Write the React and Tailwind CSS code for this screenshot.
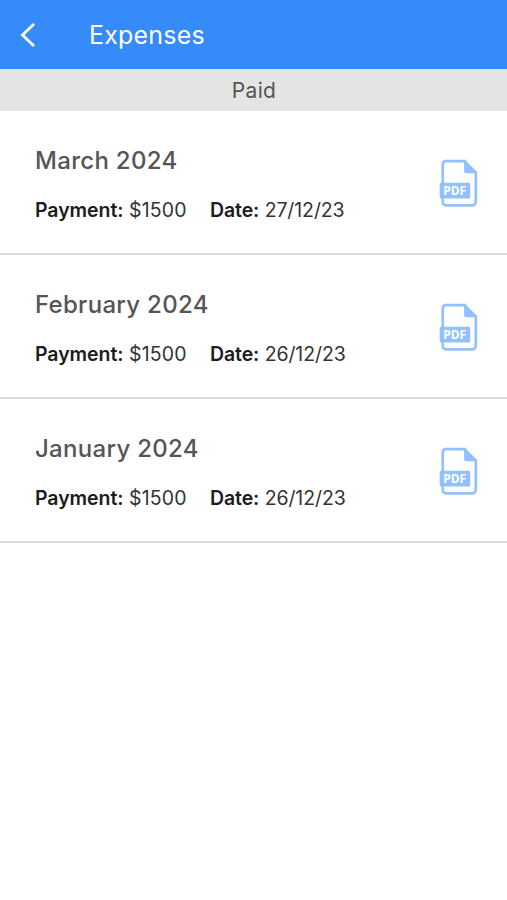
const expenses = [
  { id: 1, month: 'March 2024', payment: '$1500', date: '27/12/23' },
  { id: 2, month: 'February 2024', payment: '$1500', date: '26/12/23' },
  { id: 3, month: 'January 2024', payment: '$1500', date: '26/12/23' },
];

const PdfIcon = () => (
  <svg width="40" height="50" viewBox="0 0 40 50" fill="none">
    <path
      d="M3.7 24V5.2a3 3 0 0 1 3-3H25.5L36.8 13.5V43a3.3 3.3 0 0 1-3.3 3.3H7A3.3 3.3 0 0 1 3.7 43V36"
      stroke="#93c1fd"
      strokeWidth="2.7"
    />
    <path d="M25 1.2L38.1 14.3H28a3 3 0 0 1-3-3Z" fill="#93c1fd" />
    <rect x="0.7" y="23.8" width="30.5" height="15.7" rx="1.5" fill="#93c1fd" />
    <text
      x="4.2"
      y="36"
      fill="#fff"
      fontSize="12"
      fontWeight="700"
      textLength="22.8"
      lengthAdjust="spacingAndGlyphs"
      fontFamily="Open Sans, sans-serif"
    >
      PDF
    </text>
  </svg>
);

const ExpenseRow = ({ expense }) => (
  <div className="h-36 flex items-center justify-between pl-[35px] pr-7 pt-1 border-b-2 border-[#dadada]">
    <div>
      <h2 className="text-2xl leading-8 font-medium text-[#555] tracking-[0.3px]">{expense.month}</h2>
      <div className="flex mt-[19px] text-[19.5px] leading-7 text-[#333]">
        <p className="w-[175px] tracking-[0.12px]">
          <span className="font-semibold text-[#1c1c1c] tracking-[-0.05px]">Payment:</span> {expense.payment}
        </p>
        <p className="tracking-[-0.1px]">
          <span className="font-semibold text-[#1c1c1c]">Date:</span> {expense.date}
        </p>
      </div>
    </div>
    <button type="button">
      <PdfIcon />
    </button>
  </div>
);

const App = () => {
  return (
    <div className="min-h-screen bg-white font-[Inter,sans-serif]">
      {/* Header */}
      <header className="h-[69px] flex items-center bg-[#348bf9] text-white">
        <button type="button" className="ml-5 pt-px">
          <svg width="16" height="24" viewBox="0 0 16 24" fill="none">
            <path d="M14 1L2.5 12L14 23" stroke="currentColor" strokeWidth="2.8" />
          </svg>
        </button>
        <h1 className="ml-[53px] pt-[3px] text-[25px] tracking-[0.2px]">Expenses</h1>
      </header>

      {/* Status */}
      <div className="h-[42px] flex items-center justify-center pt-px pl-px bg-[#e4e4e4] text-[#555] text-[21px] tracking-[0.4px]">
        Paid
      </div>

      {/* Expense list */}
      {expenses.map((expense) => (
        <ExpenseRow key={expense.id} expense={expense} />
      ))}
    </div>
  );
};

export default App;
